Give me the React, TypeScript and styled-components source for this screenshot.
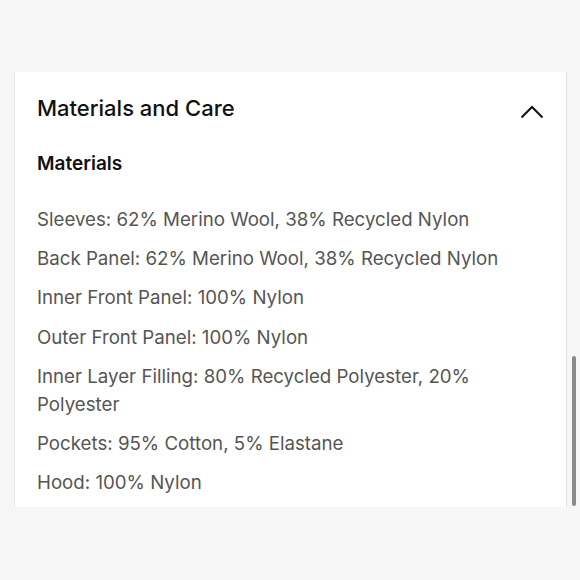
import React from 'react'
import styled, { createGlobalStyle } from 'styled-components'

const GlobalStyle = createGlobalStyle`
  html, body {
    margin: 0;
    padding: 0;
    background: #f6f6f6;
  }
  body {
    font-family: Inter, "Noto Sans", "Liberation Sans", sans-serif;
  }
`

const Page = styled.div`
  height: 580px;
  padding-top: 72px;
  box-sizing: border-box;
  display: flex;
  align-items: flex-start;
  padding-left: 14px;
`

const Panel = styled.section`
  flex: 1;
  height: 435px;
  overflow: hidden;
  background: #ffffff;
  border-left: 1px solid #e6e6e6;
  border-right: 1px solid #e2e2e2;
  padding: 22px 22px 0 22px;
  box-sizing: border-box;
`

const HeaderRow = styled.div`
  display: flex;
  align-items: center;
  justify-content: space-between;
`

const Title = styled.h2`
  margin: 0;
  font-size: 22px;
  line-height: 28px;
  font-weight: 500;
  color: #111;
`

const Chevron = styled.svg`
  width: 24px;
  height: 14px;
  margin-top: 8px;
`

const SubTitle = styled.h3`
  margin: 28px 0 0 0;
  font-size: 19px;
  line-height: 28px;
  font-weight: 600;
  color: #111;
`

const List = styled.ul`
  list-style: none;
  margin: 28px 0 0 0;
  padding: 0;
  display: flex;
  flex-direction: column;
  gap: 11.2px;
`

const Item = styled.li`
  font-size: 18.7px;
  line-height: 28px;
  color: #555;
`

const Track = styled.div`
  width: 13px;
  height: 435px;
  display: flex;
  justify-content: center;
`

const Thumb = styled.div`
  width: 4px;
  height: 150px;
  margin-top: 284px;
  border-radius: 2px;
  background: #8a8a8a;
`

const materials = [
  'Sleeves: 62% Merino Wool, 38% Recycled Nylon',
  'Back Panel: 62% Merino Wool, 38% Recycled Nylon',
  'Inner Front Panel: 100% Nylon',
  'Outer Front Panel: 100% Nylon',
  'Inner Layer Filling: 80% Recycled Polyester, 20% Polyester',
  'Pockets: 95% Cotton, 5% Elastane',
  'Hood: 100% Nylon',
]

export default function App() {
  return (
    <>
      <GlobalStyle />
      <Page>
        <Panel>
          <HeaderRow>
            <Title>Materials and Care</Title>
            <Chevron viewBox="0 0 24 14" fill="none">
              <path d="M1.5 12.5L12 2L22.5 12.5" stroke="#111" strokeWidth="2" />
            </Chevron>
          </HeaderRow>
          <SubTitle>Materials</SubTitle>
          <List>
            {materials.map((m) => (
              <Item key={m}>{m}</Item>
            ))}
          </List>
        </Panel>
        <Track>
          <Thumb />
        </Track>
      </Page>
    </>
  )
}
